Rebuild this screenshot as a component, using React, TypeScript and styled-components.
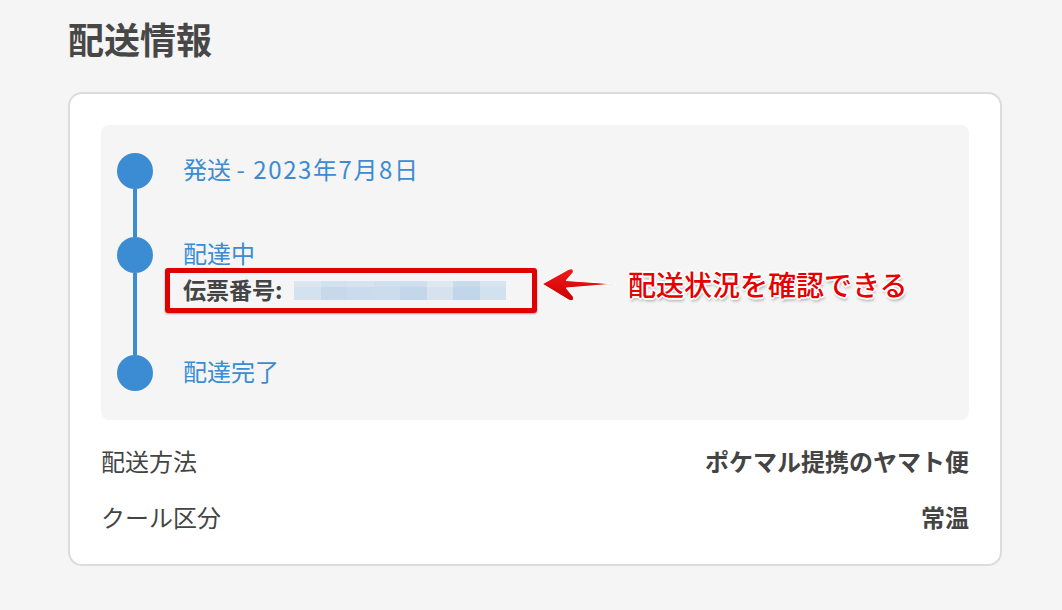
import React from 'react';
import styled, { createGlobalStyle } from 'styled-components';

const GlobalStyle = createGlobalStyle`
  html, body {
    margin: 0;
    padding: 0;
    background: #f5f5f5;
  }
  body {
    font-family: "Noto Sans CJK JP", "Noto Sans", sans-serif;
    color: #444;
  }
`;

const BLUE = '#3b8cd2';

const Page = styled.div`
  padding: 13px 0 0 68px;
  width: 934px;
`;

const Title = styled.h2`
  margin: 0 0 29px;
  font-size: 36px;
  line-height: 50px;
  font-weight: 700;
  color: #474747;
`;

const Card = styled.section`
  background: #fff;
  border: 2px solid #dcdcdc;
  border-radius: 14px;
  padding: 31px 31px 18px;
`;

const Panel = styled.div`
  background: #f5f5f5;
  border-radius: 8px;
  padding: 28px 16px 29px;
`;

const Step = styled.div`
  display: grid;
  grid-template-columns: 36px 1fr;
  column-gap: 30px;
`;

const Rail = styled.div`
  display: flex;
  flex-direction: column;
  align-items: center;
`;

const Dot = styled.span`
  width: 36px;
  height: 36px;
  border-radius: 50%;
  background: ${BLUE};
  flex-shrink: 0;
`;

const Line = styled.span<{ $hidden?: boolean }>`
  flex: 1;
  width: 4px;
  background: ${p => (p.$hidden ? 'transparent' : BLUE)};
`;

const StepBody = styled.div<{ $last?: boolean }>`
  padding-bottom: ${p => (p.$last ? 0 : 48)}px;
`;

const StepLabel = styled.div`
  font-size: 24px;
  line-height: 32px;
  margin-bottom: 4px;
  color: ${BLUE};
`;

const Date = styled.span`
  letter-spacing: 1.6px;
`;

const Tracking = styled.div`
  position: relative;
  display: flex;
  align-items: center;
  height: 34px;
  font-size: 23px;
  font-weight: 700;
  color: #444;
`;

const TrackingLabel = styled.span`
  margin-top: -2px;
`;

const Highlight = styled.span`
  position: absolute;
  left: -18px;
  top: -5px;
  width: 372px;
  height: 45px;
  box-sizing: border-box;
  border: 5px solid #e00000;
  border-radius: 3px;
  box-shadow: 0 1px 2px rgba(0, 0, 0, 0.35);
  pointer-events: none;
`;

const Masked = styled.span`
  display: grid;
  grid-template-columns: repeat(8, 26.5px);
  grid-template-rows: 6px 13px;
  margin-left: 12px;
`;

const Pixel = styled.span<{ $c: string }>`
  background: ${p => p.$c};
`;

const Note = styled.div`
  position: absolute;
  left: 357px;
  top: -12px;
  display: flex;
  align-items: center;
  gap: 10px;
  white-space: nowrap;
`;

const NoteText = styled.span`
  font-size: 28px;
  font-weight: 500;
  color: #e60000;
  text-shadow:
    -2px 0 0 #fff, 2px 0 0 #fff, 0 -2px 0 #fff, 0 2px 0 #fff,
    -1px -1px 0 #fff, 1px 1px 0 #fff, -1px 1px 0 #fff, 1px -1px 0 #fff,
    1px 3px 3px rgba(0, 0, 0, 0.35);
`;

const InfoList = styled.div`
  margin-top: 12px;
  margin-bottom: 2px;
`;

const InfoRow = styled.div`
  display: flex;
  justify-content: space-between;
  align-items: center;
  height: 56px;
  font-size: 24px;
  color: #444;
`;

const InfoValue = styled.span`
  font-weight: 700;
`;

const Arrow = () => (
  <svg width="78" height="46" viewBox="0 0 78 46">
    <defs>
      <linearGradient id="arrowFill" x1="0" y1="0" x2="0" y2="1">
        <stop offset="0" stopColor="#f21a1a" />
        <stop offset="1" stopColor="#cc0000" />
      </linearGradient>
    </defs>
    <path
      d="M2 23 L28 8.5 Q34 6 33.5 11.5 L26.5 19.5 L75 23 L26.5 27 L33.5 35.5 Q34.5 41.5 28.5 39 Z"
      fill="url(#arrowFill)"
      stroke="#fff"
      strokeWidth="1.2"
      strokeLinejoin="round"
    />
  </svg>
);

const pixels = [
  '#dbe6f0', '#d3e2ef', '#d6e4f0', '#d0e0ee', '#cfdfed', '#dde8f1', '#cadcec', '#d7e4f0',
  '#d4e2ef', '#c6d9eb', '#c9dbec', '#cbdcec', '#c3d7ea', '#d6e3ef', '#c1d6ea', '#d2e1ee',
];

export default function App() {
  return (
    <>
      <GlobalStyle />
      <Page>
        <Title>配送情報</Title>
        <Card>
          <Panel>
            <Step>
              <Rail>
                <Dot />
                <Line />
              </Rail>
              <StepBody>
                <StepLabel>
                  発送 <Date>- 2023年7月8日</Date>
                </StepLabel>
              </StepBody>
            </Step>
            <Step>
              <Rail>
                <Dot />
                <Line />
              </Rail>
              <StepBody>
                <StepLabel>配達中</StepLabel>
                <Tracking>
                  <TrackingLabel>伝票番号:</TrackingLabel>
                  <Masked>
                    {pixels.map((c, i) => (
                      <Pixel key={i} $c={c} />
                    ))}
                  </Masked>
                  <Highlight />
                  <Note>
                    <Arrow />
                    <NoteText>配送状況を確認できる</NoteText>
                  </Note>
                </Tracking>
              </StepBody>
            </Step>
            <Step>
              <Rail>
                <Dot />
                <Line $hidden />
              </Rail>
              <StepBody $last>
                <StepLabel>配達完了</StepLabel>
              </StepBody>
            </Step>
          </Panel>
          <InfoList>
            <InfoRow>
              <span>配送方法</span>
              <InfoValue>ポケマル提携のヤマト便</InfoValue>
            </InfoRow>
            <InfoRow>
              <span>クール区分</span>
              <InfoValue>常温</InfoValue>
            </InfoRow>
          </InfoList>
        </Card>
      </Page>
    </>
  );
}
